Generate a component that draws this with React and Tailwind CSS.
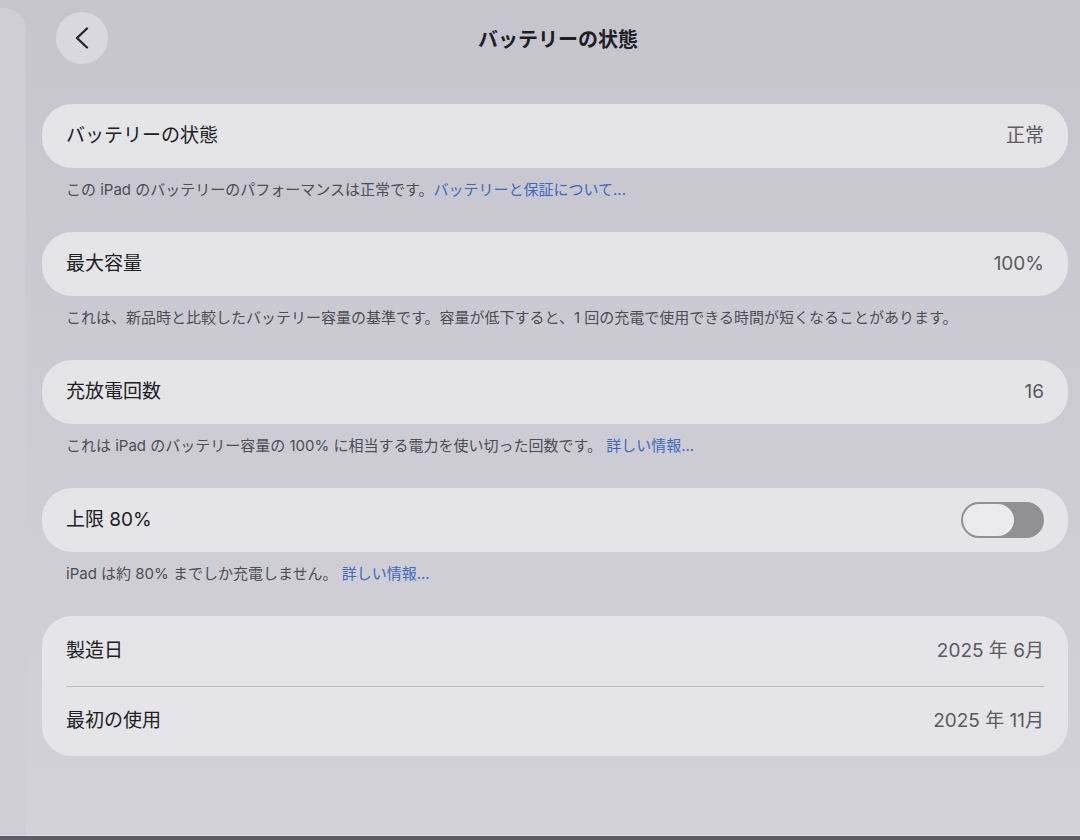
import React from "react";

const font = { fontFamily: 'Inter, "Noto Sans CJK JP", "Noto Sans", sans-serif' };

function Card({ children, className = "" }) {
  return (
    <div className={`bg-[#e5e4e8] rounded-[30px] ${className}`}>{children}</div>
  );
}

function Row({ title, value, children, h = "h-[64px]" }) {
  return (
    <div className={`flex items-center justify-between px-[24px] ${h}`}>
      <span className="text-[19px] text-[#202024]">{title}</span>
      {value !== undefined && (
        <span className="text-[19px] text-[#5a5a60]">{value}</span>
      )}
      {children}
    </div>
  );
}

function Note({ children }) {
  return (
    <p className="px-[24px] mt-[12px] mb-[32px] text-[15px] leading-[20px] text-[#4c4c53]">
      {children}
    </p>
  );
}

function Link({ children }) {
  return <span className="text-[#3a69bf]">{children}</span>;
}

function Toggle() {
  return (
    <div className="w-[83px] h-[36px] rounded-full bg-[#8f8f94] p-[2px] flex items-center">
      <div className="w-[51px] h-[32px] rounded-full bg-[#ebebed]" />
    </div>
  );
}

export default function App() {
  return (
    <div
      style={font}
      className="w-[1080px] h-[840px] flex flex-col bg-gradient-to-b from-[#c6c5ce] to-[#d3d2d8] overflow-hidden"
    >
      <div className="flex flex-1">
        <div className="w-[26px] mt-[8px] rounded-tr-[22px] bg-[#cfced6] shrink-0" />
        <div className="flex-1 pl-[16px] pr-[12px]">
          {/* Header */}
          <div className="relative h-[64px] pt-[12px] flex items-center">
            <div className="w-[52px] h-[52px] ml-[14px] rounded-full bg-[#d9d8de] flex items-center justify-center">
              <svg width="18" height="24" viewBox="0 0 18 24" fill="none">
                <path
                  d="M14 2.5 L4 12 L14 21.5"
                  stroke="#26262a"
                  strokeWidth="2.4"
                  strokeLinecap="round"
                  strokeLinejoin="round"
                />
              </svg>
            </div>
            <div className="absolute left-0 right-0 top-[14px] h-[52px] flex items-center justify-center pointer-events-none">
              <span className="text-[20px] font-bold text-[#1f1f23] pl-[6px]">バッテリーの状態</span>
            </div>
          </div>

          <div className="mt-[40px]">
            <Card>
              <Row title="バッテリーの状態" value="正常" />
            </Card>
            <Note>
              この iPad のバッテリーのパフォーマンスは正常です。<Link>バッテリーと保証について...</Link>
            </Note>

            <Card>
              <Row title="最大容量" value="100%" />
            </Card>
            <Note>
              これは、新品時と比較したバッテリー容量の基準です。容量が低下すると、1 回の充電で使用できる時間が短くなることがあります。
            </Note>

            <Card>
              <Row title="充放電回数" value="16" />
            </Card>
            <Note>
              これは iPad のバッテリー容量の 100% に相当する電力を使い切った回数です。 <Link>詳しい情報...</Link>
            </Note>

            <Card>
              <Row title="上限 80%">
                <Toggle />
              </Row>
            </Card>
            <Note>
              iPad は約 80% までしか充電しません。 <Link>詳しい情報...</Link>
            </Note>

            <Card>
              <Row title="製造日" value="2025 年 6月" h="h-[70px]" />
              <div className="mx-[24px] h-px bg-[#b9b8bd]" />
              <Row title="最初の使用" value="2025 年 11月" h="h-[69px]" />
            </Card>
          </div>
        </div>
      </div>
      <div className="h-[1px] bg-[#e2e1e6]" />
      <div className="h-[4px] bg-[#5e5e62]" />
    </div>
  );
}
